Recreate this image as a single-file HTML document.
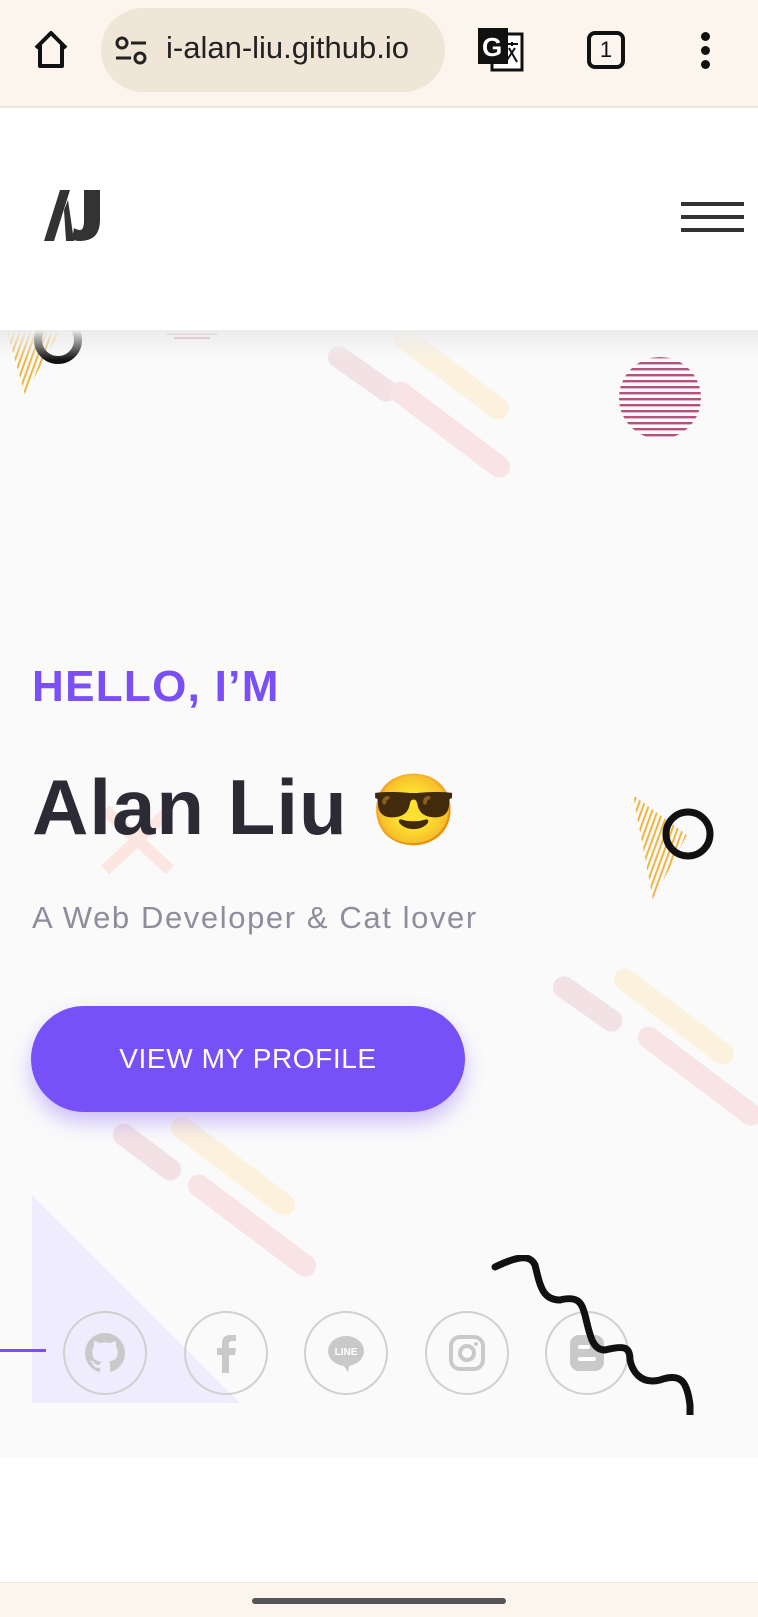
<!DOCTYPE html>
<html><head><meta charset="utf-8"><style>
*{margin:0;padding:0;box-sizing:border-box}
body{width:758px;height:1617px;position:relative;overflow:hidden;background:#fff;font-family:"Liberation Sans",sans-serif}
.abs{position:absolute}
.bar{left:0;top:0;width:758px;height:108px;background:#fcf5ee;border-bottom:2px solid #ece6dd}
.url{left:101px;top:8px;width:344px;height:84px;border-radius:42px;background:#efe6d7}
.hero{left:0;top:330px;width:758px;height:1128px;background:#fafafa;overflow:hidden}
.shadow{left:0;top:330px;width:758px;height:30px;background:linear-gradient(#ececec,rgba(250,250,250,0))}
.pill{position:absolute;border-radius:12px;height:22px;transform-origin:left center}
.circ{position:absolute;width:84px;height:84px;border:2px solid #d0d0d0;border-radius:50%;top:981px;display:flex;align-items:center;justify-content:center}
</style></head><body>
<div class="abs bar"></div>
<svg class="abs" style="left:30px;top:28px" width="42" height="44" viewBox="0 0 42 44"><path d="M6 20 L21 5 L36 20 M10 17 V38 H32 V17" fill="none" stroke="#111" stroke-width="4" stroke-linejoin="round"/></svg>
<div class="abs url"></div>
<svg class="abs" style="left:114px;top:36px" width="34" height="30" viewBox="0 0 34 30"><circle cx="8" cy="7" r="5" fill="none" stroke="#222" stroke-width="3"/><path d="M17 7h15M2 22h15" stroke="#222" stroke-width="3"/><circle cx="26" cy="22" r="5" fill="none" stroke="#222" stroke-width="3"/></svg>
<div class="abs" style="left:166px;top:30px;font-size:31px;color:#222">i-alan-liu.github.io</div>
<svg class="abs" style="left:476px;top:26px" width="50" height="48" viewBox="0 0 50 48"><rect x="16" y="8" width="30" height="36" fill="#fff" stroke="#111" stroke-width="3"/><rect x="2" y="2" width="30" height="36" fill="#111"/><text x="6" y="30" font-size="26" font-weight="bold" fill="#fff" font-family="Liberation Sans">G</text><path d="M30 18h12M36 16v4M33 22l8 14M39 22l-8 12" stroke="#111" stroke-width="2"/></svg>
<div class="abs" style="left:587px;top:31px;width:38px;height:38px;border:4px solid #111;border-radius:8px;font-size:22px;text-align:center;line-height:30px;color:#111">1</div>
<div class="abs" style="left:701px;top:32px;width:9px;height:9px;border-radius:50%;background:#111;box-shadow:0 14px 0 #111,0 28px 0 #111"></div>

<svg class="abs" style="left:44px;top:190px" width="58" height="52" viewBox="0 0 58 52"><path d="M0 51 L16 0 H26 L10 51Z" fill="#333"/><path d="M24 10 L30 51 H22 L20 20Z" fill="#333"/><path d="M40 0 H56 V30 Q56 51 36 51 Q30 51 28 49 L30 38 Q33 40 36 40 Q40 40 40 30Z" fill="#333"/></svg>
<div class="abs" style="left:681px;top:202px;width:63px;height:4px;background:#333;box-shadow:0 13px 0 #333,0 26px 0 #333"></div>

<div class="abs hero">
 <div class="pill" style="left:330px;top:10px;width:80px;background:#f2e2e6;transform:rotate(35deg)"></div>
 <div class="pill" style="left:395px;top:-10px;width:140px;background:#fbf1dd;transform:rotate(37deg)"></div>
 <div class="pill" style="left:392px;top:45px;width:145px;background:#f8e4e4;transform:rotate(37deg)"></div>
 <div class="pill" style="left:555px;top:640px;width:80px;background:#f2e2e6;transform:rotate(35deg)"></div>
 <div class="pill" style="left:616px;top:632px;width:145px;background:#fbf1dd;transform:rotate(37deg)"></div>
 <div class="pill" style="left:640px;top:690px;width:150px;background:#f8e4e4;transform:rotate(37deg)"></div>
 <div class="pill" style="left:115px;top:787px;width:80px;background:#f2e2e6;transform:rotate(37deg)"></div>
 <div class="pill" style="left:173px;top:780px;width:150px;background:#fbf1dd;transform:rotate(37deg)"></div>
 <div class="pill" style="left:190px;top:838px;width:155px;background:#f8e4e4;transform:rotate(37deg)"></div>
 <svg style="position:absolute;left:618px;top:26px" width="84" height="84"><defs><pattern id="st" width="4" height="6" patternUnits="userSpaceOnUse"><rect width="4" height="2.4" fill="#b8507e"/></pattern></defs><circle cx="42" cy="42" r="41" fill="url(#st)"/></svg>
 <svg style="position:absolute;left:162px;top:-10px" width="60" height="20"><rect x="5" y="13" width="50" height="2" fill="#c46a92"/><rect x="12" y="17" width="36" height="2" fill="#c46a92"/></svg>
 <svg style="position:absolute;left:0;top:-5px" width="90" height="80"><defs><pattern id="ys" width="5" height="5" patternUnits="userSpaceOnUse" patternTransform="rotate(20)"><rect width="2" height="5" fill="#f0b540"/></pattern></defs><path d="M5 0 L60 5 L25 70Z" fill="url(#ys)"/><circle cx="58" cy="15" r="20" fill="none" stroke="#111" stroke-width="8"/></svg>
 <svg style="position:absolute;left:625px;top:465px" width="100" height="110"><path d="M8 0 L62 40 L28 105Z" fill="url(#ys)"/><circle cx="63" cy="39" r="22" fill="none" stroke="#111" stroke-width="7"/></svg>
 <svg style="position:absolute;left:95px;top:470px" width="90" height="80"><path d="M10 10 L75 70 M75 10 L10 70" stroke="#fbe6e2" stroke-width="12"/></svg>
 <svg style="position:absolute;left:32px;top:865px" width="210" height="210"><path d="M0 0 V208 H208Z" fill="#efecfd"/></svg>
 <div style="position:absolute;left:32px;top:332px;font-weight:bold;font-size:44px;color:#7a4ff5;letter-spacing:1.3px">HELLO, I’M</div>
 <div style="position:absolute;left:32px;top:432px;font-weight:bold;font-size:78px;color:#2b2a35;letter-spacing:1px;white-space:nowrap">Alan Liu <span style="font-size:70px">😎</span></div>
 <div style="position:absolute;left:32px;top:570px;font-size:31px;color:#8e8d9e;letter-spacing:1.6px">A Web Developer &amp; Cat lover</div>
 <div style="position:absolute;left:31px;top:676px;width:434px;height:106px;border-radius:53px;background:#7850f7;box-shadow:0 10px 20px rgba(120,80,247,.35);color:#fff;font-size:28px;text-align:center;line-height:106px;letter-spacing:0.6px">VIEW MY PROFILE</div>
 <div style="position:absolute;left:0;top:1019px;width:46px;height:3px;background:#7a4ff5"></div>
 <div class="circ" style="left:63px"><svg width="40" height="40" viewBox="0 0 16 16"><path fill="#c9c9c9" d="M8 0C3.6 0 0 3.6 0 8c0 3.5 2.3 6.5 5.5 7.6.4.1.5-.2.5-.4v-1.4c-2.2.5-2.7-1-2.7-1-.4-.9-.9-1.2-.9-1.2-.7-.5.1-.5.1-.5.8.1 1.2.8 1.2.8.7 1.2 1.9.9 2.3.7.1-.5.3-.9.5-1.1-1.8-.2-3.6-.9-3.6-4 0-.9.3-1.6.8-2.1-.1-.2-.4-1 .1-2.1 0 0 .7-.2 2.2.8.6-.2 1.3-.3 2-.3s1.4.1 2 .3c1.5-1 2.2-.8 2.2-.8.4 1.1.2 1.9.1 2.1.5.6.8 1.3.8 2.1 0 3.1-1.9 3.7-3.6 3.9.3.3.5.8.5 1.5v2.2c0 .2.1.5.6.4C13.7 14.5 16 11.5 16 8c0-4.4-3.6-8-8-8z"/></svg></div>
 <div class="circ" style="left:184px"><svg width="30" height="40" viewBox="0 0 30 40"><path d="M18 40V22h6l1-7h-7v-4c0-2 1-3 3-3h4V2h-6c-5 0-8 3-8 8v5H6v7h5v18z" fill="#c9c9c9"/></svg></div>
 <div class="circ" style="left:304px"><svg width="40" height="40" viewBox="0 0 40 40"><ellipse cx="20" cy="18" rx="18" ry="15" fill="#c9c9c9"/><path d="M16 30 L22 39 L24 30Z" fill="#c9c9c9"/><text x="20" y="22" font-size="10" font-weight="bold" fill="#fff" text-anchor="middle" font-family="Liberation Sans">LINE</text></svg></div>
 <div class="circ" style="left:425px"><svg width="38" height="38" viewBox="0 0 38 38"><rect x="3" y="3" width="32" height="32" rx="9" fill="none" stroke="#c9c9c9" stroke-width="4"/><circle cx="19" cy="19" r="7" fill="none" stroke="#c9c9c9" stroke-width="4"/><circle cx="28" cy="10" r="2" fill="#c9c9c9"/></svg></div>
 <div class="circ" style="left:545px"><svg width="38" height="40" viewBox="0 0 38 40"><rect x="2" y="2" width="34" height="36" rx="9" fill="#c9c9c9"/><rect x="10" y="12" width="12" height="4" rx="2" fill="#fff"/><rect x="10" y="24" width="18" height="4" rx="2" fill="#fff"/></svg></div>
 <svg style="position:absolute;left:490px;top:925px" width="220" height="160"><path d="M5 12 C30 0 40 0 45 10 C50 30 52 45 70 45 C90 40 92 50 95 60 C100 80 102 95 115 95 C135 90 140 92 140 105 C142 115 150 130 170 125 C190 118 197 125 200 150 V160" fill="none" stroke="#111" stroke-width="7" stroke-linecap="round"/></svg>
</div>
<div class="abs shadow"></div>
<div class="abs" style="left:0;top:1582px;width:758px;height:35px;background:#fcf5ee;border-top:1px solid #ece6dd"></div>
<div class="abs" style="left:252px;top:1598px;width:254px;height:6px;border-radius:3px;background:#555"></div>
</body></html>
